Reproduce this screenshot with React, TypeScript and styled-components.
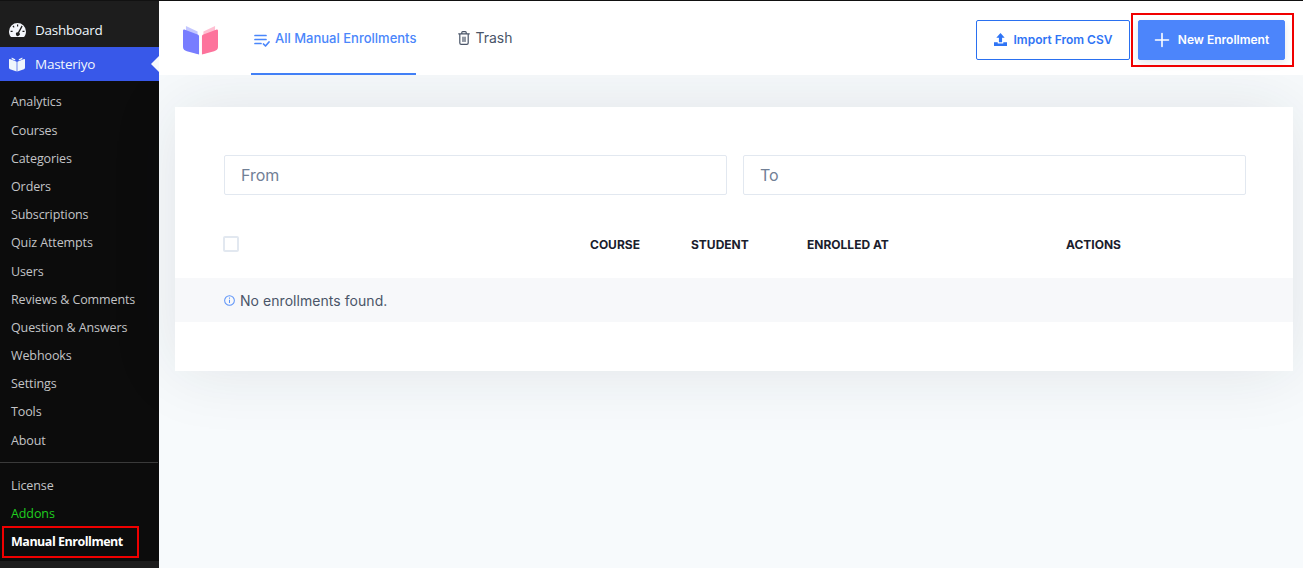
import React from "react";
import styled, { createGlobalStyle } from "styled-components";

const Global = createGlobalStyle`
  html, body { margin: 0; padding: 0; height: 100%; background: #f7fafc; }
  #root { height: 100%; }
  * { box-sizing: border-box; }
`;

const Page = styled.div`
  display: flex;
  width: 1303px;
  height: 568px;
  overflow: hidden;
  border-top: 1px solid #111;
  font-family: Inter, "Liberation Sans", sans-serif;
`;

const Sidebar = styled.aside`
  width: 159px;
  flex: none;
  display: flex;
  flex-direction: column;
  background: #1d1d1d;
  font-family: "Open Sans", "Liberation Sans", sans-serif;
`;

const TopItem = styled.div<{ $active?: boolean }>`
  position: relative;
  display: flex;
  align-items: center;
  height: ${(p) => (p.$active ? "34px" : "46px")};
  padding: ${(p) => (p.$active ? "0" : "12px")} 0 0 9px;
  gap: ${(p) => (p.$active ? "10px" : "9px")};
  font-size: 13.5px;
  letter-spacing: -0.25px;
  color: #f0f6fc;
  background: ${(p) => (p.$active ? "#3858e9" : "transparent")};
`;

const Notch = styled.span`
  position: absolute;
  right: 0;
  top: 9px;
  border: 8px solid transparent;
  border-left-width: 0;
  border-right-color: #f7fafc;
`;

const SubMenu = styled.nav`
  height: 480px;
  flex: none;
  display: flex;
  flex-direction: column;
  background: #0c0c0c;
  padding-top: 6.8px;
`;

const SubItem = styled.div<{ $tone?: "green" | "strong" }>`
  height: 28.2px;
  flex: none;
  display: flex;
  align-items: center;
  padding-left: 11px;
  font-size: 12.5px;
  letter-spacing: ${(p) => (p.$tone === "strong" ? "-0.48px" : "-0.1px")};
  white-space: nowrap;
  color: ${(p) => (p.$tone === "green" ? "#1fd01f" : p.$tone === "strong" ? "#fff" : "#c3c4c7")};
  font-weight: ${(p) => (p.$tone === "strong" ? 700 : 400)};
`;

const Divider = styled.div`
  height: 1px;
  background: #3a3a3a;
  margin: 8px 1px 8px 0;
`;

const Annotated = styled.div`
  position: relative;
`;

const RedBox = styled.span<{ $l: number; $t: number; $w: number; $h: number }>`
  position: absolute;
  left: ${(p) => p.$l}px;
  top: ${(p) => p.$t}px;
  width: ${(p) => p.$w}px;
  height: ${(p) => p.$h}px;
  border: 2px solid #f00000;
  pointer-events: none;
`;

const Content = styled.div`
  flex: 1;
  min-width: 0;
  display: flex;
  flex-direction: column;
  background: #f7fafc;
`;

const Header = styled.header`
  position: relative;
  z-index: 1;
  height: 74px;
  flex: none;
  display: flex;
  align-items: flex-start;
  background: #fff;
  padding-left: 24px;
`;

const Logo = styled.div`
  width: 36px;
  height: 29px;
  margin-top: 25px;
  margin-right: 32px;
  flex: none;
`;

const Tabs = styled.div`
  display: flex;
  height: 74px;
  gap: 42px;
`;

const Tab = styled.div<{ $active?: boolean }>`
  display: flex;
  align-items: flex-start;
  gap: 5px;
  padding: ${(p) => (p.$active ? "29px 0 0 3px" : "28px 0 0")};
  height: 74px;
  font-size: ${(p) => (p.$active ? "13px" : "14px")};
  font-weight: ${(p) => (p.$active ? 500 : 400)};
  color: ${(p) => (p.$active ? "#4a86fb" : "#4a5568")};
  border-bottom: 2px solid ${(p) => (p.$active ? "#4280f6" : "transparent")};
  white-space: nowrap;
  line-height: 17px;
`;

const Actions = styled.div`
  margin-left: auto;
  display: flex;
  gap: 8px;
  margin-top: 19px;
  margin-right: 18px;
`;

const Button = styled.div<{ $primary?: boolean }>`
  display: flex;
  align-items: center;
  justify-content: center;
  gap: ${(p) => (p.$primary ? "8px" : "7px")};
  height: 40px;
  padding-bottom: 1px;
  width: ${(p) => (p.$primary ? "147px" : "154px")};
  border-radius: 2px;
  font-size: 12px;
  font-weight: 600;
  white-space: nowrap;
  color: ${(p) => (p.$primary ? "#fff" : "#2f74f5")};
  background: ${(p) => (p.$primary ? "#4c85fb" : "#fff")};
  border: 1px solid ${(p) => (p.$primary ? "#4c85fb" : "#2a70f0")};
  box-shadow: ${(p) => (p.$primary ? "0 3px 8px rgba(40,60,100,.12)" : "none")};
`;

const Main = styled.main`
  flex: 1;
  padding: 32px 10px 0 16px;
`;

const Card = styled.section`
  height: 264px;
  background: #fff;
  padding-top: 48px;
  box-shadow: 0 0 64px rgba(30, 40, 50, 0.1);
`;

const Filters = styled.div`
  display: grid;
  grid-template-columns: 503px 503px;
  gap: 16px;
  padding-left: 49px;
`;

const Field = styled.div`
  height: 40px;
  display: flex;
  align-items: center;
  padding-left: 16px;
  border: 1px solid #e2e8f0;
  border-radius: 2px;
  font-size: 16px;
  color: #718096;
`;

const TableHead = styled.div`
  display: grid;
  grid-template-columns: 366px 101px 116px 259px 1fr;
  align-items: center;
  height: 83px;
  padding: 15px 0 0 49px;
  font-size: 12px;
  font-weight: 700;
  color: #1a202c;
`;

const Check = styled.span`
  display: block;
  width: 16px;
  height: 16px;
  margin-left: -1px;
  border: 2px solid #e2e8f0;
  border-radius: 2px;
`;

const EmptyRow = styled.div`
  height: 44px;
  display: flex;
  align-items: center;
  gap: 5px;
  padding-left: 49px;
  background: #f7f8fa;
  font-size: 14px;
  letter-spacing: 0.05px;
  color: #4a5568;
`;

const items = [
  "Analytics", "Courses", "Categories", "Orders", "Subscriptions", "Quiz Attempts", "Users",
  "Reviews & Comments", "Question & Answers", "Webhooks", "Settings", "Tools", "About",
];

const BookLogo = () => (
  <svg viewBox="0 0 36 31" width="35" height="29" preserveAspectRatio="none">
    <path d="M3 0 15 6v24L3 25Z" fill="#c3c6ff" />
    <path d="M33 0 21 6v24l12-5Z" fill="#ffc0d3" />
    <path d="M0 5c0-1 1-1.500 2-1l13 5c1 .4 1.500 1 1.500 2v19.500L4 27c-2.500-.7-4-2-4-4.500Z" fill="#787dff" />
    <path d="M36 5c0-1-1-1.500-2-1l-13 5c-1 .4-1.500 1-1.500 2v19.500L32 27c2.500-.7 4-2 4-4.500Z" fill="#fd739c" />
  </svg>
);

const Gauge = () => (
  <svg viewBox="0 0 17 14" width="17" height="14">
    <path fill="#f4f6fb" d="M8.500 0A8.500 8.500 0 0 0 0 8.500c0 1.800.5 3.500 1.400 4.800.2.400.5.700 1 .7h12.200c.5 0 .8-.3 1-.7.900-1.300 1.400-3 1.400-4.800A8.500 8.500 0 0 0 8.500 0Z" />
    <path fill="#1d1d1d" d="M8 1.500h1.200v2H8ZM3.500 3.300l.9-.8 1.200 1.400-.9.800ZM1.600 7.700h2v1.200h-2ZM13.500 7.700h2v1.200h-2ZM12.600 2.600l1 .8-3.400 6.400a1.900 1.900 0 1 1-1.300-.6Z" />
  </svg>
);

const Book = ({ fill = "#f0f6fc" }: { fill?: string }) => (
  <svg viewBox="0 0 18 16" width="16" height="15">
    <path fill={fill} d="M0 2.500c0-.6.500-.9 1-.7l7 2.700c.4.200.6.500.6 1V16L2 13.700C.700 13.300 0 12.500 0 11.300Z" />
    <path fill={fill} d="M18 2.500c0-.6-.500-.9-1-.7l-7 2.700c-.4.200-.6.500-.6 1V16l6.600-2.300c1.300-.4 2-1.200 2-2.400Z" />
    <path fill={fill} d="M3 0l4 2v1.500L3 2ZM15 0l-4 2v1.500L15 2Z" />
  </svg>
);

const ListCheck = () => (
  <svg viewBox="0 0 16 16" width="16" height="16" fill="none" stroke="#4a86fb" strokeWidth="1.700" strokeLinecap="round" strokeLinejoin="round" style={{ marginTop: 2 }}>
    <path d="M1 3.500h11M1 7.500h11M1 11.500h6M9.500 12l2 2 3.500-4" />
  </svg>
);

const TrashIcon = () => (
  <svg viewBox="0 0 12 14" width="12" height="14" fill="none" stroke="#4a5568" strokeWidth="1.200" strokeLinecap="round" strokeLinejoin="round" style={{ marginTop: 2 }}>
    <path d="M.7 2.800h10.600M3.800 2.800V1.500c0-.5.400-.9.900-.9h2.600c.5 0 .9.400.9.900v1.300M1.800 2.800v9.200c0 .8.600 1.400 1.400 1.400h5.600c.8 0 1.400-.6 1.400-1.400V2.800M5 6v4.500M7 6v4.500" />
  </svg>
);

const UploadIcon = () => (
  <svg viewBox="0 0 14 14" width="13" height="13" fill="#2f74f5">
    <path d="M7 0 11.500 5H8.700v5H5.300V5H2.500Z" />
    <path d="M0 10h4v1.300h6V10h4v4H0Z" />
  </svg>
);

const PlusIcon = () => (
  <svg viewBox="0 0 16 16" width="16" height="16" fill="none" stroke="#fff" strokeWidth="1.600" strokeLinecap="round">
    <path d="M8 1.500v13M1.500 8h13" />
  </svg>
);

const InfoIcon = () => (
  <svg viewBox="0 0 12 12" width="11" height="11" fill="none" stroke="#5c93f8" strokeWidth="1.100">
    <circle cx="6" cy="6" r="5.300" />
    <path d="M6 5.300v3.500M6 2.800v1.300" />
  </svg>
);

export default function App() {
  return (
    <>
      <Global />
      <Page>
        <Sidebar>
          <TopItem><Gauge />Dashboard</TopItem>
          <TopItem $active><Book />Masteriyo<Notch /></TopItem>
          <SubMenu>
            {items.map((t) => <SubItem key={t}>{t}</SubItem>)}
            <Divider />
            <SubItem>License</SubItem>
            <SubItem $tone="green">Addons</SubItem>
            <Annotated>
              <SubItem $tone="strong">Manual Enrollment</SubItem>
              <RedBox $l={2} $t={-2} $w={137} $h={32} />
            </Annotated>
          </SubMenu>
        </Sidebar>
        <Content>
          <Header>
            <Logo><BookLogo /></Logo>
            <Tabs>
              <Tab $active><ListCheck />All Manual Enrollments</Tab>
              <Tab><TrashIcon />Trash</Tab>
            </Tabs>
            <Actions>
              <Button><UploadIcon />Import From CSV</Button>
              <Annotated>
                <Button $primary><PlusIcon />New Enrollment</Button>
                <RedBox $l={-7} $t={-7} $w={163} $h={54} />
              </Annotated>
            </Actions>
          </Header>
          <Main>
            <Card>
              <Filters>
                <Field>From</Field>
                <Field>To</Field>
              </Filters>
              <TableHead>
                <Check />
                <span>COURSE</span>
                <span>STUDENT</span>
                <span>ENROLLED AT</span>
                <span>ACTIONS</span>
              </TableHead>
              <EmptyRow><InfoIcon />No enrollments found.</EmptyRow>
            </Card>
          </Main>
        </Content>
      </Page>
    </>
  );
}
